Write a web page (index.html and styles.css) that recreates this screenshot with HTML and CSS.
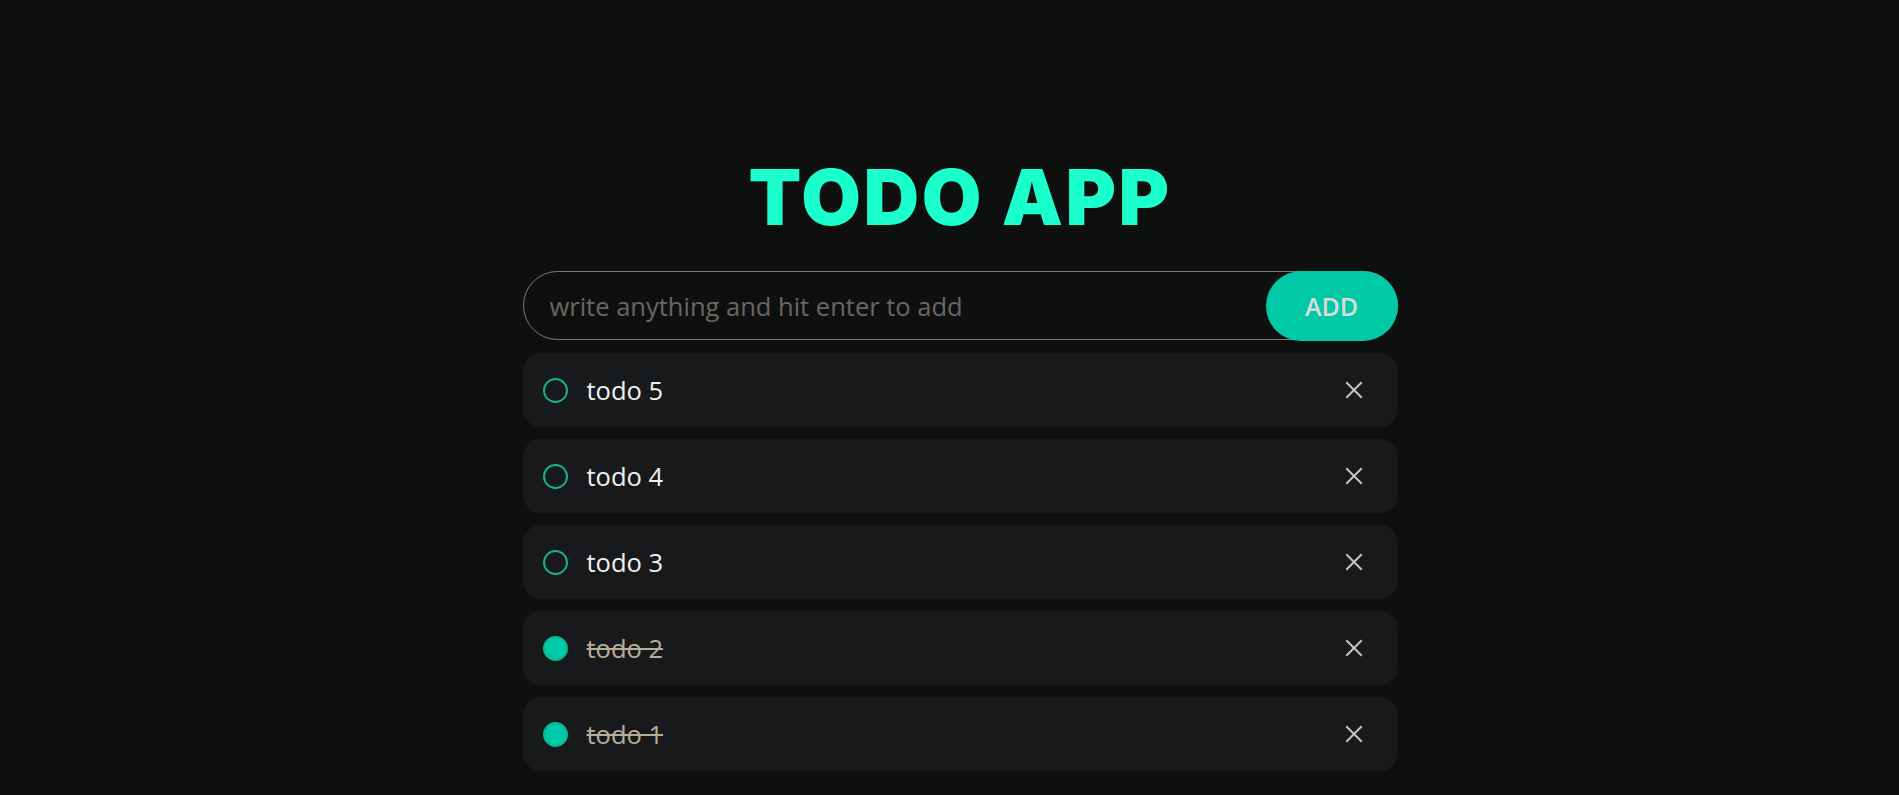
FILE: index.html
```html
<!DOCTYPE html>
<html lang="en">
<head>
<meta charset="utf-8">
<title>Todo App</title>
<link rel="stylesheet" href="styles.css">
</head>
<body>
<main class="app">
  <h1 class="title">TODO APP</h1>
  <form class="add-form">
    <input class="add-input" type="text" placeholder="write anything and hit enter to add">
    <button class="add-btn" type="button">ADD</button>
  </form>
  <ul class="todo-list">
    <li class="todo">
      <span class="check"></span>
      <span class="todo-text">todo 5</span>
      <button class="remove" type="button" aria-label="remove"><svg viewBox="0 0 18 18" width="18" height="18"><path d="M2 2L16 16M16 2L2 16" stroke="currentColor" stroke-width="2" stroke-linecap="square" fill="none"/></svg></button>
    </li>
    <li class="todo">
      <span class="check"></span>
      <span class="todo-text">todo 4</span>
      <button class="remove" type="button" aria-label="remove"><svg viewBox="0 0 18 18" width="18" height="18"><path d="M2 2L16 16M16 2L2 16" stroke="currentColor" stroke-width="2" stroke-linecap="square" fill="none"/></svg></button>
    </li>
    <li class="todo">
      <span class="check"></span>
      <span class="todo-text">todo 3</span>
      <button class="remove" type="button" aria-label="remove"><svg viewBox="0 0 18 18" width="18" height="18"><path d="M2 2L16 16M16 2L2 16" stroke="currentColor" stroke-width="2" stroke-linecap="square" fill="none"/></svg></button>
    </li>
    <li class="todo done">
      <span class="check"></span>
      <span class="todo-text">todo 2</span>
      <button class="remove" type="button" aria-label="remove"><svg viewBox="0 0 18 18" width="18" height="18"><path d="M2 2L16 16M16 2L2 16" stroke="currentColor" stroke-width="2" stroke-linecap="square" fill="none"/></svg></button>
    </li>
    <li class="todo done">
      <span class="check"></span>
      <span class="todo-text">todo 1</span>
      <button class="remove" type="button" aria-label="remove"><svg viewBox="0 0 18 18" width="18" height="18"><path d="M2 2L16 16M16 2L2 16" stroke="currentColor" stroke-width="2" stroke-linecap="square" fill="none"/></svg></button>
    </li>
  </ul>
</main>
</body>
</html>
```

FILE: styles.css
```css
* { box-sizing: border-box; }

html, body {
  margin: 0;
  background: #0e100f;
}

body {
  font-family: "Open Sans", "Noto Sans", sans-serif;
  color: #ececec;
  min-height: 100vh;
}

.app {
  display: flex;
  flex-direction: column;
  align-items: center;
  padding: 150px 0 0 21px;
}

.title {
  margin: 0;
  font-family: Inter, "Noto Sans", sans-serif;
  font-weight: 900;
  font-size: 77px;
  line-height: 94px;
  color: #1affcc;
  letter-spacing: 2.5px;
}

.add-form {
  display: grid;
  width: 875px;
  margin-top: 27px;
}

.add-input,
.add-btn {
  grid-area: 1 / 1;
}

.add-input {
  height: 69px;
  border: 1.5px solid #857a6b;
  border-radius: 35px;
  background: #0e100f;
  padding: 0 150px 0 26px;
  font-family: "Open Sans", "Noto Sans", sans-serif;
  font-size: 25.5px;
  color: #ececec;
  outline: none;
}

.add-input::placeholder {
  color: #6b6660;
}

.add-btn {
  justify-self: end;
  width: 132px;
  height: 70px;
  border: none;
  border-radius: 35px;
  background: #00c9a7;
  color: #dedbd6;
  font-family: "Open Sans", "Noto Sans", sans-serif;
  font-weight: 600;
  font-size: 25px;
  cursor: pointer;
}

.todo-list {
  list-style: none;
  margin: 12px 0 0;
  padding: 0;
  width: 875px;
  display: flex;
  flex-direction: column;
  gap: 12px;
}

.todo {
  display: flex;
  align-items: center;
  height: 74px;
  padding: 0 35px 0 20px;
  background: #18191b;
  border-radius: 18px;
}

.check {
  flex: none;
  width: 25px;
  height: 25px;
  border: 2px solid #17b08c;
  border-radius: 50%;
}

.todo-text {
  flex: 1;
  margin-left: 19px;
  font-size: 25.5px;
  color: #f0f0f0;
}

.todo.done .check {
  background: #00c9a7;
  border-color: #0fb592;
}

.todo.done .todo-text {
  color: #b8ad9d;
  text-decoration: line-through;
  text-decoration-thickness: 2px;
}

.remove {
  flex: none;
  display: flex;
  padding: 0;
  border: none;
  background: none;
  color: #c9c3b8;
  cursor: pointer;
}
```
